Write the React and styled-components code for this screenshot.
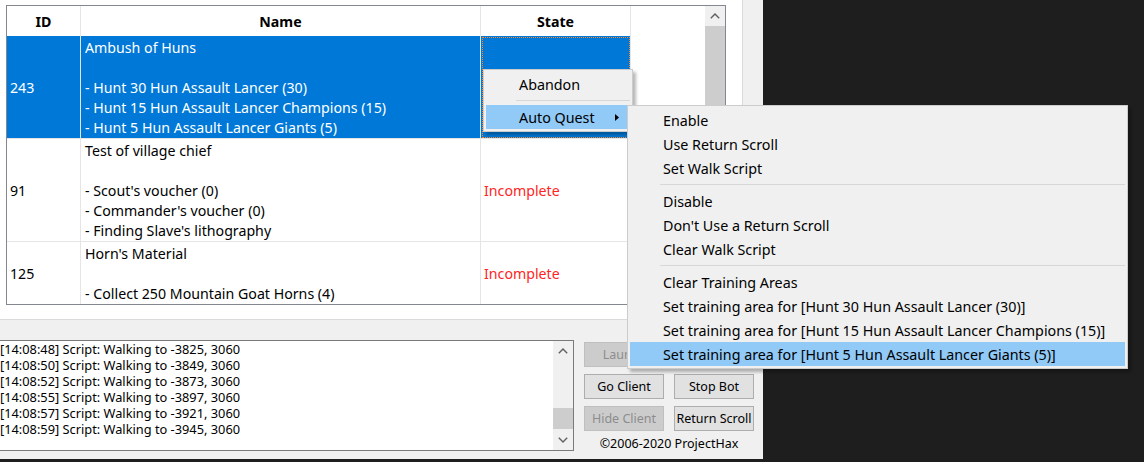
import React from 'react';
import styled, { createGlobalStyle } from 'styled-components';

const quests = [
  {
    id: '243',
    name: 'Ambush of Huns\n\n- Hunt 30 Hun Assault Lancer (30)\n- Hunt 15 Hun Assault Lancer Champions (15)\n- Hunt 5 Hun Assault Lancer Giants (5)',
    state: '',
    height: 103,
    selected: true,
  },
  {
    id: '91',
    name: "Test of village chief\n\n- Scout's voucher (0)\n- Commander's voucher (0)\n- Finding Slave's lithography",
    state: 'Incomplete',
    height: 103,
  },
  {
    id: '125',
    name: "Horn's Material\n\n- Collect 250 Mountain Goat Horns (4)",
    state: 'Incomplete',
    height: 62,
    last: true,
  },
];

const logLines = [
  '[14:08:48] Script: Walking to -3825, 3060',
  '[14:08:50] Script: Walking to -3849, 3060',
  '[14:08:52] Script: Walking to -3873, 3060',
  '[14:08:55] Script: Walking to -3897, 3060',
  '[14:08:57] Script: Walking to -3921, 3060',
  '[14:08:59] Script: Walking to -3945, 3060',
];

const subMenu = [
  ['Enable', 'Use Return Scroll', 'Set Walk Script'],
  ["Disable", "Don't Use a Return Scroll", 'Clear Walk Script'],
  [
    'Clear Training Areas',
    'Set training area for [Hunt 30 Hun Assault Lancer (30)]',
    'Set training area for [Hunt 15 Hun Assault Lancer Champions (15)]',
    'Set training area for [Hunt 5 Hun Assault Lancer Giants (5)]',
  ],
];

const Chevron = ({ down }) => (
  <svg width="10" height="6" viewBox="0 0 10 6">
    <polyline
      points={down ? '0.8,0.8 5,5 9.2,0.8' : '0.8,5.2 5,1 9.2,5.2'}
      fill="none"
      stroke="#606060"
      strokeWidth="1.4"
    />
  </svg>
);

const App = () => {
  return (
    <Page>
      <GlobalStyle />
      <Window>
        <TabPage>
          <ListView>
            <Grid>
              <HeaderCell>ID</HeaderCell>
              <HeaderCell>Name</HeaderCell>
              <HeaderCell>State</HeaderCell>
              <HeaderCell $filler />
              {quests.map((q) => (
                <React.Fragment key={q.id}>
                  <Cell $selected={q.selected} $last={q.last} style={{ height: q.height }}>
                    {q.id}
                  </Cell>
                  <NameCell $selected={q.selected} $last={q.last}>{q.name}</NameCell>
                  <Cell $selected={q.selected} $last={q.last} $focus={q.selected} $red>
                    {q.state}
                  </Cell>
                  <Cell $last={q.last} $filler />
                </React.Fragment>
              ))}
            </Grid>
            <ScrollBar>
              <ArrowButton><Chevron /></ArrowButton>
              <Track>
                <Thumb $height={220} />
              </Track>
            </ScrollBar>
          </ListView>
        </TabPage>

        <Bottom>
          <LogBox>
            <LogText>{logLines.join('\n')}</LogText>
            <ScrollBar>
              <ArrowButton><Chevron /></ArrowButton>
              <Track $end>
                <Thumb $height={21} />
              </Track>
              <ArrowButton><Chevron down /></ArrowButton>
            </ScrollBar>
          </LogBox>
          <ButtonPanel>
            <Button disabled>Launch</Button>
            <Button>Start Bot</Button>
            <Button>Go Client</Button>
            <Button>Stop Bot</Button>
            <Button disabled>Hide Client</Button>
            <Button>Return Scroll</Button>
            <Copyright>©2006-2020 ProjectHax</Copyright>
          </ButtonPanel>
        </Bottom>

        <Menu $left={483} $top={69} $width={150}>
          <MenuItem>Abandon</MenuItem>
          <Separator />
          <MenuItem $hot>
            Auto Quest
            <SubArrow>
              <svg width="4" height="7" viewBox="0 0 4 7">
                <polygon points="0,0 4,3.5 0,7" fill="#000" />
              </svg>
            </SubArrow>
          </MenuItem>
        </Menu>

        <Menu $left={627} $top={105} $width={501}>
          {subMenu.map((group, gi) => (
            <React.Fragment key={gi}>
              {gi > 0 && <Separator />}
              {group.map((label, i) => (
                <MenuItem key={label} $hot={gi === 2 && i === 3}>
                  {label}
                </MenuItem>
              ))}
            </React.Fragment>
          ))}
        </Menu>
      </Window>
    </Page>
  );
};

const GlobalStyle = createGlobalStyle`
  html, body {
    margin: 0;
    padding: 0;
    background: #1e1e1e;
  }
  body {
    font-family: "Noto Sans", "Open Sans", sans-serif;
    overflow: hidden;
  }
`;

const Page = styled.div`
  width: 1144px;
  height: 462px;
  background: #1e1e1e;
  overflow: hidden;
`;

const Window = styled.div`
  position: relative;
  width: 763px;
  height: 459px;
  background: #f0f0f0;
  display: flex;
  flex-direction: column;
`;

const TabPage = styled.div`
  box-sizing: border-box;
  flex: none;
  width: 743px;
  height: 320px;
  padding: 5px 0 0 6px;
  background: #fff;
  border-right: 1px solid #dadada;
  border-bottom: 1px solid #dadada;
`;

const ListView = styled.div`
  box-sizing: border-box;
  width: 720px;
  height: 300px;
  border: 1px solid #828790;
  display: flex;
  background: #fff;
`;

const Grid = styled.div`
  display: grid;
  grid-template-columns: 74px 400px 150px 74px;
  grid-auto-rows: min-content;
  align-content: start;
  font-size: 14.2px;
  color: #000;
`;

const HeaderCell = styled.div`
  box-sizing: border-box;
  height: 30px;
  display: flex;
  align-items: center;
  justify-content: center;
  font-weight: 700;
  border-right: ${(p) => (p.$filler ? 'none' : '1px solid #e5e5e5')};
`;

const Cell = styled.div`
  box-sizing: border-box;
  display: flex;
  align-items: center;
  padding: 1px 0 0 3px;
  background: ${(p) => (p.$selected ? '#0078d7' : '#fff')};
  color: ${(p) => (p.$selected ? '#fff' : p.$red ? '#ff2424' : '#000')};
  border-right: ${(p) => (p.$filler ? 'none' : '1px solid #e5e5e5')};
  border-bottom: ${(p) => (p.$last ? 'none' : '1px solid #e5e5e5')};
  outline: ${(p) => (p.$focus ? '1px dotted #ff8728' : 'none')};
  outline-offset: -2px;
`;

const NameCell = styled.div`
  box-sizing: border-box;
  padding: 2px 0 0 4px;
  line-height: 20px;
  white-space: pre-line;
  background: ${(p) => (p.$selected ? '#0078d7' : '#fff')};
  color: ${(p) => (p.$selected ? '#fff' : '#000')};
  border-right: 1px solid #e5e5e5;
  border-bottom: ${(p) => (p.$last ? 'none' : '1px solid #e5e5e5')};
`;

const ScrollBar = styled.div`
  width: 20px;
  flex: none;
  margin-left: auto;
  background: #f0f0f0;
  display: flex;
  flex-direction: column;
`;

const ArrowButton = styled.div`
  height: 20px;
  flex: none;
  display: flex;
  align-items: center;
  justify-content: center;
`;

const Track = styled.div`
  flex: 1;
  display: flex;
  flex-direction: column;
  justify-content: ${(p) => (p.$end ? 'flex-end' : 'flex-start')};
  padding-bottom: ${(p) => (p.$end ? '1px' : '0')};
`;

const Thumb = styled.div`
  height: ${(p) => p.$height}px;
  background: #cdcdcd;
`;

const Bottom = styled.div`
  flex: none;
  display: flex;
  align-items: flex-start;
  padding-top: 20px;
`;

const LogBox = styled.div`
  box-sizing: border-box;
  margin-left: -3px;
  width: 577px;
  height: 111px;
  border: 1px solid #7a7a7a;
  background: #fff;
  display: flex;
`;

const LogText = styled.div`
  padding-left: 2px;
  font-size: 12.8px;
  line-height: 16px;
  white-space: pre;
  color: #000;
`;

const ButtonPanel = styled.div`
  margin-left: 10px;
  padding-top: 2px;
  display: grid;
  grid-template-columns: 80px 80px;
  grid-template-rows: 25px 25px 25px auto;
  column-gap: 10px;
  row-gap: 7px;
`;

const Button = styled.button`
  box-sizing: border-box;
  height: 25px;
  padding: 0;
  font-family: inherit;
  font-size: 12.5px;
  color: #000;
  background: #e1e1e1;
  border: 1px solid #adadad;

  &:disabled {
    color: #8c8c8c;
    background: #cccccc;
    border-color: #bfbfbf;
  }
`;

const Copyright = styled.div`
  grid-column: span 2;
  margin-top: -2px;
  text-align: center;
  font-size: 12.5px;
  line-height: 16px;
  color: #000;
`;

const Menu = styled.div`
  position: absolute;
  left: ${(p) => p.$left}px;
  top: ${(p) => p.$top}px;
  width: ${(p) => p.$width}px;
  box-sizing: border-box;
  padding: 2px;
  background: #f0f0f0;
  border: 1px solid #cccccc;
  box-shadow: 3px 3px 3px rgba(0, 0, 0, 0.28);
  font-size: 14.3px;
  color: #000;
`;

const MenuItem = styled.div`
  height: 24px;
  display: flex;
  align-items: center;
  padding-left: 33px;
  white-space: nowrap;
  background: ${(p) => (p.$hot ? '#91c9f7' : 'transparent')};
`;

const SubArrow = styled.span`
  display: flex;
  margin-left: auto;
  margin-right: 11px;
`;

const Separator = styled.div`
  height: 9px;
  display: flex;
  align-items: center;
  margin-left: 30px;

  &::after {
    content: '';
    flex: 1;
    height: 1px;
    background: #d7d7d7;
  }
`;

export default App;
